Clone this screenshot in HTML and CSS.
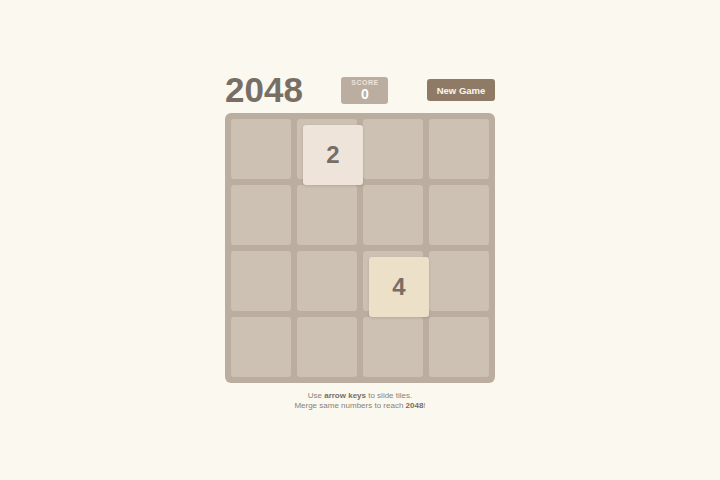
FILE: index.html
```html
<!DOCTYPE html>
<html>
<head>
<meta charset="utf-8">
<link rel="stylesheet" href="styles.css">
</head>
<body>
<div class="game">
  <div class="header">
    <h1 class="title">2048</h1>
    <div class="score">
      <div class="score-label">SCORE</div>
      <div class="score-value">0</div>
    </div>
    <button class="new-game">New Game</button>
  </div>
  <div class="board">
    <div class="cell"></div><div class="cell"></div><div class="cell"></div><div class="cell"></div>
    <div class="cell"></div><div class="cell"></div><div class="cell"></div><div class="cell"></div>
    <div class="cell"></div><div class="cell"></div><div class="cell"></div><div class="cell"></div>
    <div class="cell"></div><div class="cell"></div><div class="cell"></div><div class="cell"></div>
    <div class="tile tile-2 pos-r0-c1">2</div>
    <div class="tile tile-4 pos-r2-c2">4</div>
  </div>
  <p class="hint">Use <b>arrow keys</b> to slide tiles.<br>Merge same numbers to reach <b>2048</b>!</p>
</div>
</body>
</html>
```
FILE: styles.css
```css
html, body {
  margin: 0;
  padding: 0;
}
body {
  background: #faf8ef;
  font-family: "Liberation Sans", Arial, sans-serif;
  color: #776e65;
  width: 720px;
  height: 480px;
  overflow: hidden;
}
.game {
  width: 270px;
  margin: 0 auto;
  padding-top: 72px;
}
.header {
  display: flex;
  justify-content: space-between;
  align-items: center;
  height: 36px;
}
.title {
  margin: 0;
  font-size: 35px;
  line-height: 36px;
  font-weight: bold;
  color: #776e65;
}
.score {
  width: 47px;
  height: 27px;
  background: #bbada0;
  border-radius: 3px;
  display: flex;
  flex-direction: column;
  align-items: center;
  justify-content: center;
  color: #fff;
}
.score-label {
  font-size: 7px;
  font-weight: bold;
  letter-spacing: 0.5px;
  line-height: 8px;
  color: #eee4da;
}
.score-value {
  font-size: 14px;
  font-weight: bold;
  line-height: 14px;
}
.new-game {
  width: 68px;
  height: 22px;
  padding: 0;
  border: none;
  border-radius: 3px;
  background: #8f7a66;
  color: #f9f6f2;
  font-family: "Liberation Sans", Arial, sans-serif;
  font-weight: bold;
  font-size: 9.5px;
}
.board {
  position: relative;
  margin-top: 5px;
  width: 270px;
  height: 270px;
  box-sizing: border-box;
  padding: 6px;
  background: #bbada0;
  border-radius: 6px;
  display: grid;
  grid-template-columns: repeat(4, 60px);
  grid-template-rows: repeat(4, 60px);
  gap: 6px;
}
.cell {
  background: #cdc1b4;
  border-radius: 3px;
}
.tile {
  position: absolute;
  width: 60px;
  height: 60px;
  border-radius: 3px;
  display: flex;
  align-items: center;
  justify-content: center;
  font-size: 24px;
  font-weight: bold;
  color: #776e65;
  box-shadow: 0 1px 3px rgba(0, 0, 0, 0.12);
}
.tile-2 { background: #eee4da; }
.tile-4 { background: #ede0c8; }
.pos-r0-c1 { left: 78px; top: 12px; }
.pos-r2-c2 { left: 144px; top: 144px; }
.hint {
  margin: 8px 0 0;
  text-align: center;
  font-size: 8px;
  line-height: 9.5px;
  color: #8a8178;
}
.hint b {
  font-weight: bold;
  color: #776e65;
}
```
